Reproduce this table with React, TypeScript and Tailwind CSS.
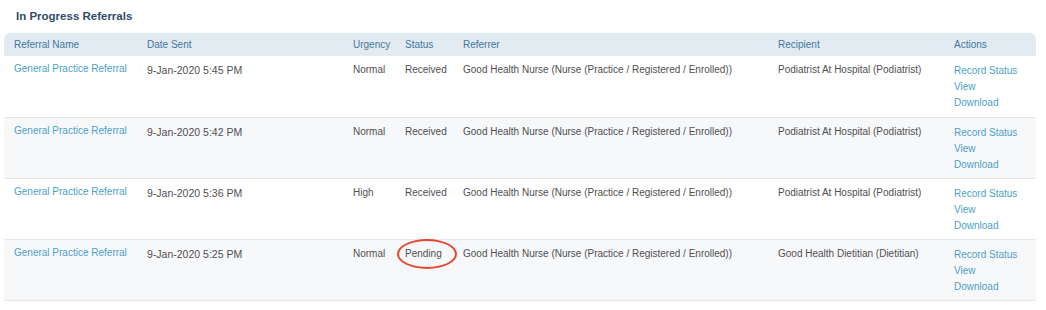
import React from "react";

type Row = {
  name: string;
  date: string;
  urgency: string;
  status: string;
  referrer: string;
  recipient: string;
};

const rows: Row[] = [
  {
    name: "General Practice Referral",
    date: "9-Jan-2020 5:45 PM",
    urgency: "Normal",
    status: "Received",
    referrer: "Good Health Nurse (Nurse (Practice / Registered / Enrolled))",
    recipient: "Podiatrist At Hospital (Podiatrist)",
  },
  {
    name: "General Practice Referral",
    date: "9-Jan-2020 5:42 PM",
    urgency: "Normal",
    status: "Received",
    referrer: "Good Health Nurse (Nurse (Practice / Registered / Enrolled))",
    recipient: "Podiatrist At Hospital (Podiatrist)",
  },
  {
    name: "General Practice Referral",
    date: "9-Jan-2020 5:36 PM",
    urgency: "High",
    status: "Received",
    referrer: "Good Health Nurse (Nurse (Practice / Registered / Enrolled))",
    recipient: "Podiatrist At Hospital (Podiatrist)",
  },
  {
    name: "General Practice Referral",
    date: "9-Jan-2020 5:25 PM",
    urgency: "Normal",
    status: "Pending",
    referrer: "Good Health Nurse (Nurse (Practice / Registered / Enrolled))",
    recipient: "Good Health Dietitian (Dietitian)",
  },
];

const cols = [
  { label: "Referral Name", w: "w-[133px]" },
  { label: "Date Sent", w: "w-[206px]" },
  { label: "Urgency", w: "w-[52px]" },
  { label: "Status", w: "w-[58px]" },
  { label: "Referrer", w: "w-[315px]" },
  { label: "Recipient", w: "w-[176px]" },
  { label: "Actions", w: "w-[92px]" },
];

export default function App() {
  return (
    <main className="h-[310px] w-[1046px] overflow-hidden bg-white font-['Liberation_Sans',Arial,sans-serif] text-[10px] text-[#4f4f4f]">
      <div className="pl-4 pt-[9px] text-[11.5px] font-bold leading-[15px] text-[#2f4b6b]">
        In Progress Referrals
      </div>

      <div className="mt-[9px] ml-1 w-[1032px]">
        <table className="w-full table-fixed border-collapse whitespace-nowrap">
          <thead>
            <tr className="h-[23px] bg-[#e2ebf2] text-[#4277a0]">
              {cols.map((c, i) => (
                <th
                  key={c.label}
                  className={`${c.w} px-[10px] text-left align-middle font-normal ${
                    i === 0 ? "rounded-tl-md" : ""
                  } ${i === cols.length - 1 ? "rounded-tr-md" : ""}`}
                >
                  {c.label}
                </th>
              ))}
            </tr>
          </thead>
          <tbody>
            {rows.map((r, i) => (
              <tr
                key={r.date}
                className={`h-[61px] border-b border-[#e6e8eb] align-top leading-4 ${
                  i % 2 === 1 ? "bg-[#f7f8fa]" : "bg-white"
                }`}
              >
                <td className="px-[10px] pt-[5px] text-[#4d9fc8]">{r.name}</td>
                <td className="px-[10px] pt-[6px] text-[10.5px]">{r.date}</td>
                <td className="px-[10px] pt-[6px]">{r.urgency}</td>
                <td className="relative px-[10px] pt-[6px]">
                  {r.status}
                  {r.status === "Pending" && (
                    <span className="pointer-events-none absolute top-[-1px] left-[2px] h-[30px] w-[60px] rounded-[50%] border-2 border-[#e8442f]" />
                  )}
                </td>
                <td className="px-[10px] pt-[6px]">{r.referrer}</td>
                <td className="px-[10px] pt-[6px]">{r.recipient}</td>
                <td className="px-[10px] pt-[7px] text-[#4d9fc8]">
                  <div>Record Status</div>
                  <div>View</div>
                  <div>Download</div>
                </td>
              </tr>
            ))}
          </tbody>
        </table>
      </div>
    </main>
  );
}
